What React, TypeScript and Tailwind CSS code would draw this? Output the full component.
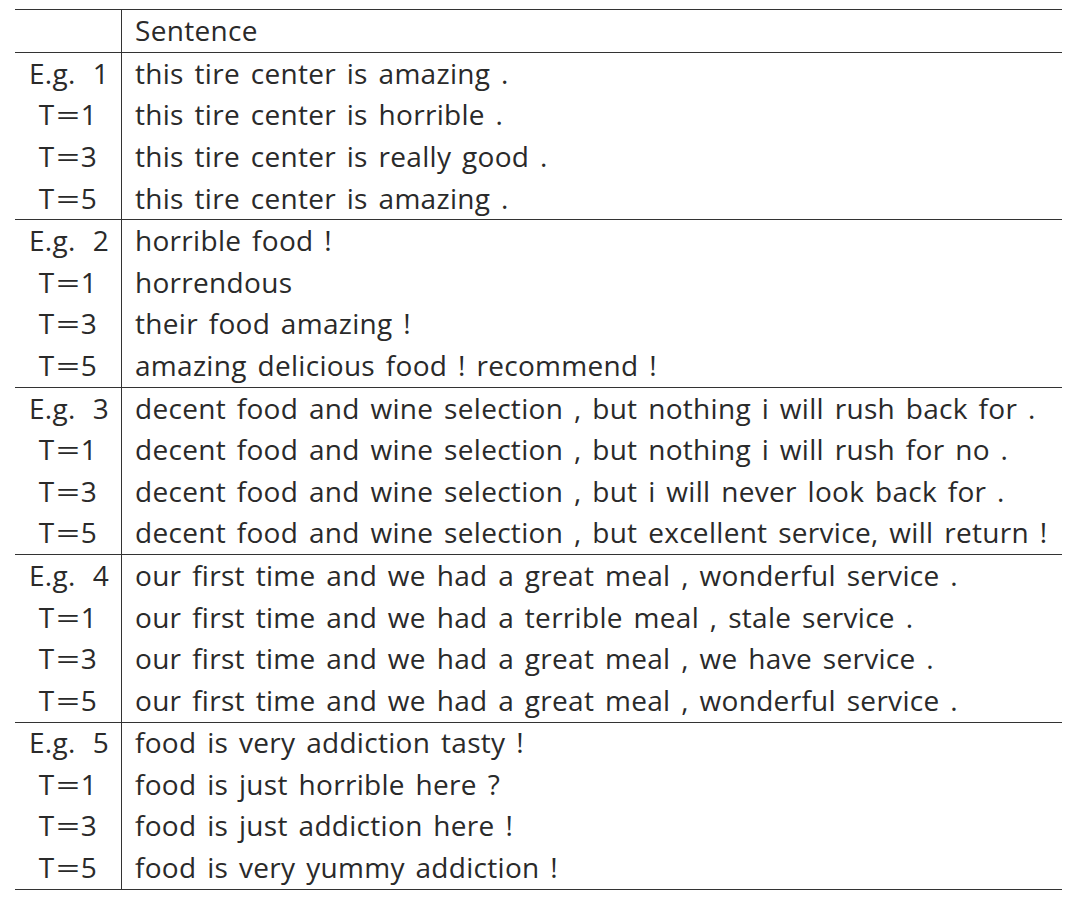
import React from 'react';

// Qualitative examples: source sentence and samples at different T
const groups = [
  {
    num: '1',
    rows: [
      'this tire center is amazing .',
      'this tire center is horrible .',
      'this tire center is really good .',
      'this tire center is amazing .',
    ],
  },
  {
    num: '2',
    rows: [
      'horrible food !',
      'horrendous',
      'their food amazing !',
      'amazing delicious food ! recommend !',
    ],
  },
  {
    num: '3',
    rows: [
      'decent food and wine selection , but nothing i will rush back for .',
      'decent food and wine selection , but nothing i will rush for no .',
      'decent food and wine selection , but i will never look back for .',
      'decent food and wine selection , but excellent service, will return !',
    ],
  },
  {
    num: '4',
    rows: [
      'our first time and we had a great meal , wonderful service .',
      'our first time and we had a terrible meal , stale service .',
      'our first time and we had a great meal , we have service .',
      'our first time and we had a great meal , wonderful service .',
    ],
  },
  {
    num: '5',
    rows: [
      'food is very addiction tasty !',
      'food is just horrible here ?',
      'food is just addiction here !',
      'food is very yummy addiction !',
    ],
  },
];

const temps = ['1', '3', '5'];

const Row: React.FC<{ label: React.ReactNode; text: string }> = ({ label, text }) => (
  <div className="flex h-[41.6px] items-center">
    <div className="w-[107px] h-full pb-[2px] flex items-center justify-center border-r border-[#333] whitespace-nowrap">
      {label}
    </div>
    <div className="pl-[13px] pb-[2px] whitespace-nowrap [word-spacing:3.2px]">{text}</div>
  </div>
);

const App: React.FC = () => {
  return (
    <div
      className="w-[1080px] h-[903px] bg-white text-[#2a2a2a] text-[28px] tracking-[0.3px] overflow-hidden pt-[9px]"
      style={{ fontFamily: '"Open Sans", "DejaVu Sans", sans-serif' }}
    >
      <div className="ml-[15px] w-[1047px] border-t-[1.5px] border-[#333]">
        <div className="flex h-[43px] items-center border-b-[1.5px] border-[#333]">
          <div className="w-[107px] h-full border-r border-[#333]" />
          <div className="pl-[13px] pb-[2px]">Sentence</div>
        </div>
        {groups.map((g) => (
          <div key={g.num} className="border-b-[1.5px] border-[#333]">
            <Row
              label={
                <span className="ml-[2px]">
                  E.g.<span className="ml-[17px]">{g.num}</span>
                </span>
              }
              text={g.rows[0]}
            />
            {temps.map((t, i) => (
              <Row
                key={t}
                label={
                  <span>
                    T<span className="inline-block mx-[5px] scale-x-150">=</span>
                    {t}
                  </span>
                }
                text={g.rows[i + 1]}
              />
            ))}
          </div>
        ))}
      </div>
    </div>
  );
};

export default App;
